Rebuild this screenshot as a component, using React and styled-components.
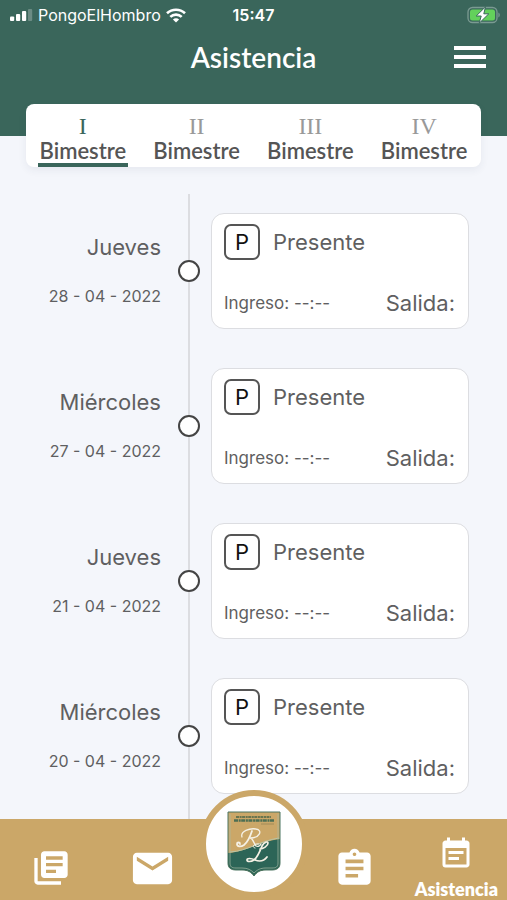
import React, { useState } from 'react';
import styled, { createGlobalStyle, ThemeProvider } from 'styled-components';

//importing icons
import { MdLibraryBooks, MdEmail, MdAssignment, MdEventNote } from 'react-icons/md';

const theme = {
    green: '#3a665b',
    gold: '#cba768',
    background: '#f4f6fb',
    text: '#5f5f61',
    rounded: "Lato, 'Open Sans', sans-serif",
    system: "Inter, Roboto, sans-serif",
};

const terms = ['I', 'II', 'III', 'IV'];

const days = [
    { day: 'Jueves', date: '28 - 04 - 2022' },
    { day: 'Miércoles', date: '27 - 04 - 2022' },
    { day: 'Jueves', date: '21 - 04 - 2022' },
    { day: 'Miércoles', date: '20 - 04 - 2022' },
];

const SignalIcon = () => (
    <svg width="23" height="12" viewBox="0 0 23 12" fill="#fff" aria-hidden="true">
        <rect x="0" y="7.5" width="4.2" height="4.5" rx="1" />
        <rect x="6" y="5" width="4.2" height="7" rx="1" />
        <rect x="12" y="2" width="4.2" height="10" rx="1" />
        <rect x="18" y="0" width="4.2" height="12" rx="1" opacity=".25" />
    </svg>
);

const WifiIcon = () => (
    <svg width="20" height="15" viewBox="0 0 20 15" fill="none" stroke="#fff" strokeWidth="2.6" aria-hidden="true">
        <path d="M1 5.3a13 13 0 0 1 18 0" />
        <path d="M4.3 8.9a8.2 8.2 0 0 1 11.4 0" />
        <path d="M10 14.6 6.9 11.5a4.4 4.4 0 0 1 6.2 0z" fill="#fff" stroke="none" />
    </svg>
);

const BatteryIcon = () => (
    <svg width="34" height="18" viewBox="0 0 34 18" aria-hidden="true">
        <rect x="1" y="1.5" width="29" height="15" rx="4.5" fill="none" stroke="#7b9a92" strokeWidth="1.3" />
        <path d="M31.4 6.5c1.8.8 1.8 4.2 0 5z" fill="#7b9a92" />
        <rect x="3" y="3.5" width="25" height="11" rx="2.5" fill="#63d15b" />
        <path d="M18.5 .8 9.2 10h5l-2 7.2 9.6-9.4h-5z" fill="#fff" stroke="#3a665b" strokeWidth="1" />
    </svg>
);

const Crest = () => (
    <svg width="54" height="66" viewBox="0 0 54 66" role="img" aria-label="RL">
        <path d="M1 1h52v51c0 5-3 7-8 7h-6c-6 0-9 2-12 6-3-4-6-6-12-6H9c-5 0-8-2-8-7z" fill="#cba768" />
        <path d="M1 42c18-1 30-11 52-14v24c0 5-3 7-8 7h-6c-6 0-9 2-12 6-3-4-6-6-12-6H9c-5 0-8-2-8-7z" fill="#2c6557" />
        <path d="M3 41c18-1 29-11 49-14" fill="none" stroke="#b9c4a4" strokeWidth="1" />
        <path d="M3 3v49c0 4 2 5 6 5h6c6 0 9 2 12 5 3-3 6-5 12-5h6c4 0 6-1 6-5V3" fill="none" stroke="#a9bca5" strokeWidth=".7" />
        <path d="M1 1h52v51c0 5-3 7-8 7h-6c-6 0-9 2-12 6-3-4-6-6-12-6H9c-5 0-8-2-8-7z" fill="none" stroke="#4b7460" strokeWidth="1" />
        <path d="M9 6h35" stroke="#68754f" strokeWidth="2" strokeDasharray="3 .6 2 .5" />
        <path d="M7 9.5h40" stroke="#4d6f53" strokeWidth="2.5" strokeDasharray="4 .7 2 .5" />
        <path d="M34 13h13" stroke="#a18b58" strokeWidth="1" />
        <g fill="none" stroke="#f5f1e5" strokeLinecap="round">
            <path d="M25 20c-2 6-4 11-8 14-3 2-7 2-7-1 0-2 3-2 3 0" strokeWidth="1.8" />
            <path d="M15 26c-2-6 8-9 14-8 7 1 4 9-6 9 3 0 4 6 6 8 2 1 4 0 5-2" strokeWidth="1.3" />
            <path d="M28 37c-4-1-1-5 4-4" strokeWidth="1" />
            <path d="M33 38c3 0 8-3 8-6 0-2-4-1-6 3-2 5-4 11-8 14-3 2-7 2-7 0s4-2 8 0c5 2 9 1 12-3" strokeWidth="1.7" />
        </g>
    </svg>
);

const Day = ({ day, date }) => (
    <StyledDay>
        <DateInfo>
            <h2>{day}</h2>
            <time>{date}</time>
        </DateInfo>
        <Marker><span /></Marker>
        <Card>
            <div className="status">
                <Badge>P</Badge>
                <p>Presente</p>
            </div>
            <div className="hours">
                <small>Ingreso: --:--</small>
                <p>Salida:</p>
            </div>
        </Card>
    </StyledDay>
);

const App = () => {
    const [term, setTerm] = useState('I');

    return (
        <ThemeProvider theme={theme}>
            <GlobalStyle />
            <Screen>
                <Header>
                    <StatusBar>
                        <div className="carrier">
                            <SignalIcon />
                            <span>PongoElHombro</span>
                            <WifiIcon />
                        </div>
                        <time>15:47</time>
                        <div className="battery"><BatteryIcon /></div>
                    </StatusBar>
                    <TitleBar>
                        <h1>Asistencia</h1>
                        <MenuButton aria-label="Menú"><i /><i /><i /></MenuButton>
                    </TitleBar>
                </Header>
                <Tabs>
                    {
                        terms.map(name => (
                            <Tab key={name} $active={name === term} onClick={() => setTerm(name)}>
                                <b>{name}</b>
                                <span>Bimestre</span>
                            </Tab>
                        ))
                    }
                </Tabs>
                <Timeline>
                    {days.map(item => <Day key={item.date} {...item} />)}
                </Timeline>
                <Nav>
                    <NavLink href="#publicaciones" aria-label="Publicaciones"><MdLibraryBooks size={40} /></NavLink>
                    <NavLink href="#mensajes" aria-label="Mensajes"><MdEmail size={47} /></NavLink>
                    <HomeLink href="#inicio" aria-label="Inicio"><Crest /></HomeLink>
                    <NavLink href="#tareas" aria-label="Tareas"><MdAssignment size={43} /></NavLink>
                    <NavLink href="#asistencia">
                        <MdEventNote size={36} />
                        <span>Asistencia</span>
                    </NavLink>
                </Nav>
            </Screen>
        </ThemeProvider>
    );
};

const GlobalStyle = createGlobalStyle`
    *{
        box-sizing: border-box;
        margin:0;
        padding:0;
    }

    body{
        background-color: ${theme.background};
        font-family: ${theme.system};
        color: ${theme.text};
    }

    button{
        border:none;
        background:none;
        cursor: pointer;
    }
`;

const Screen = styled.div`
    height:100vh;
    display:flex;
    flex-direction: column;
    overflow: hidden;
`;

const Header = styled.header`
    flex:none;
    background-color: ${props => props.theme.green};
    color:white;
    padding-bottom:56px;
`;

const StatusBar = styled.div`
    display:grid;
    grid-template-columns: 1fr auto 1fr;
    align-items: center;
    height:30px;
    padding:0 6px;
    font-size:16px;

    &>.carrier{
        display:flex;
        align-items: center;
        gap:5px;
        padding-left:4px;
    }
    &>time{
        font-weight:600;
    }
    &>.battery{
        display:flex;
        justify-content: flex-end;
    }
`;

const TitleBar = styled.div`
    display:grid;
    grid-template-columns: 1fr auto 1fr;
    align-items: center;
    height:50px;
    padding:4px 21px 0;

    &>h1{
        grid-column: 2;
        font:600 28px/36px ${props => props.theme.rounded};
    }
`;

const MenuButton = styled.button`
    justify-self: end;
    display:flex;
    flex-direction: column;
    gap:5px;

    &>i{
        width:32px;
        height:4px;
        background-color: white;
    }
`;

const Tabs = styled.nav`
    flex:none;
    position: relative;
    display:grid;
    grid-template-columns: repeat(4, 1fr);
    justify-items: center;
    margin:-32px 26px 0;
    padding-top:8px;
    background-color: white;
    border-radius: 8px;
    box-shadow:0 3px 8px rgba(40, 50, 80, .07);
`;

const Tab = styled.button`
    display:flex;
    flex-direction: column;
    align-items: center;
    justify-content: flex-start;
    height:55px;
    padding:0 2px;
    border-bottom:4px solid ${props => props.$active ? props.theme.green : 'transparent'};
    color:#555;

    &>b{
        font:400 24px/28px 'Liberation Serif', serif;
        color:${props => props.$active ? props.theme.green : '#999'};
    }
    &>span{
        font:600 22px/22px ${props => props.theme.rounded};
    }
`;

const Timeline = styled.main`
    flex:1;
    min-height:0;
    margin-top:27px;
    overflow-y: auto;
    scrollbar-width: none;
`;

const StyledDay = styled.article`
    display:grid;
    grid-template-columns: 161fr 50px 296fr;
    height:155px;

    &:last-child{
        height:175px;
    }
`;

const DateInfo = styled.div`
    display:flex;
    flex-direction: column;
    align-items: flex-end;
    gap:24px;
    padding-top:39px;

    &>h2{
        font-size:22px;
        line-height:28px;
        font-weight:400;
    }
    &>time{
        font-size:16px;
        line-height:22px;
    }
`;

const Marker = styled.div`
    display:flex;
    justify-content: center;
    padding-top:66px;
    margin-left:6px;
    background:linear-gradient(#dcdde1, #dcdde1) center / 2px 100% no-repeat;

    &>span{
        width:22px;
        height:22px;
        border:2px solid #444;
        border-radius: 50%;
        background-color: white;
    }
`;

const Card = styled.section`
    display:flex;
    flex-direction: column;
    justify-content: space-between;
    height:116px;
    margin:19px 38px 0 0;
    padding:10px 13px 11px 12px;
    background-color: white;
    border:1px solid #dcdde1;
    border-radius: 13px;
    font-size:22px;
    line-height:28px;

    &>.status{
        display:flex;
        align-items: center;
        gap:13px;
    }
    &>.hours{
        display:flex;
        align-items: center;
        justify-content: space-between;
    }
    small{
        font-size:17px;
    }
`;

const Badge = styled.span`
    width:36px;
    height:36px;
    border:2px solid #555;
    border-radius: 7px;
    color:#111;
    text-align: center;
    line-height:32px;
`;

const Nav = styled.nav`
    flex:none;
    position: relative;
    display:grid;
    grid-template-columns: repeat(5, minmax(0, 1fr));
    grid-template-rows: 81px;
    justify-items: center;
    align-items: end;
    background-color: ${props => props.theme.gold};
`;

const NavLink = styled.a`
    display:flex;
    flex-direction: column;
    align-items: center;
    justify-content: center;
    gap:6px;
    height:64px;
    color:white;
    text-decoration: none;

    &>span{
        font:800 18px/22px ${props => props.theme.rounded};
    }
`;

const HomeLink = styled.a`
    display:flex;
    align-items: center;
    justify-content: center;
    width:108px;
    height:108px;
    margin-bottom:2px;
    border:6px solid ${props => props.theme.gold};
    border-radius: 50%;
    background-color: white;
`;

export default App;
